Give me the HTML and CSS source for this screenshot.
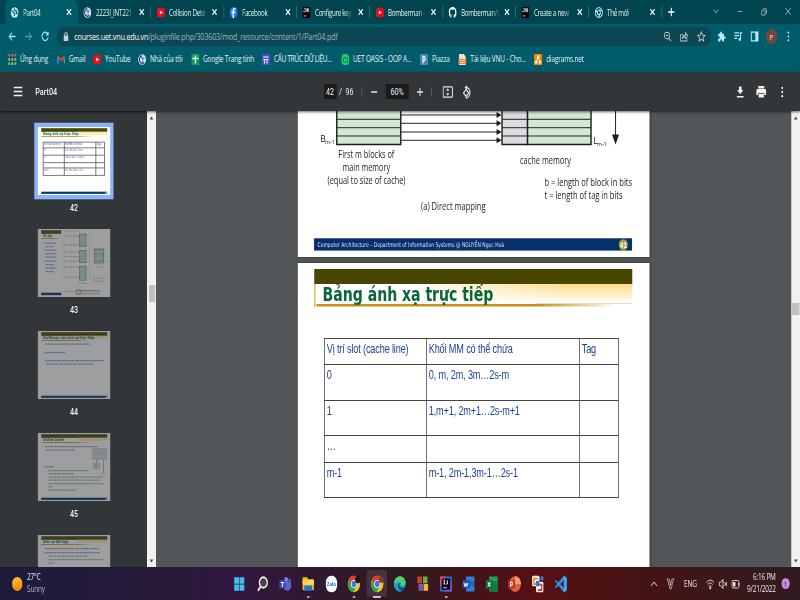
FILE: index.html
```html
<!DOCTYPE html>
<html lang="vi">
<head>
<meta charset="utf-8">
<title>Part04</title>
<link rel="stylesheet" href="styles.css">
</head>
<body>
<svg width="0" height="0" class="defs">
  <defs>
    <linearGradient id="gold" x1="0" x2="1"><stop offset="0" stop-color="#c49a10"/><stop offset=".65" stop-color="#c49a10"/><stop offset="1" stop-color="#fff"/></linearGradient>
    <linearGradient id="sun" x1="0" x2="0" y2="1"><stop offset="0" stop-color="#ffc21f"/><stop offset="1" stop-color="#f5820d"/></linearGradient>
    <linearGradient id="edge" x1="0" x2="1" y2="1"><stop offset="0" stop-color="#2ec2c8"/><stop offset="1" stop-color="#0f6cc4"/></linearGradient>
    <symbol id="x" viewBox="0 0 10 10"><path d="M2.2 2.2l5.6 5.6M7.8 2.2L2.2 7.8" stroke="#eef7f8" stroke-width="1.5" fill="none"/></symbol>
    <symbol id="globe" viewBox="0 0 16 16"><circle cx="8" cy="8" r="7.5" fill="#bdf0f4"/><path d="M2 5l4 3 2 2-1 3M7 2l1 3 4 1-1 3 3 1" stroke="#075d6b" stroke-width="2" fill="none"/></symbol>
    <symbol id="uet" viewBox="0 0 16 16"><circle cx="8" cy="8" r="7.6" fill="#d8e2f2"/><path d="M8 2.500a5.500 5.500 0 1 0 4 9.500" fill="none" stroke="#1f3a7c" stroke-width="2"/><path d="M6 6h6.500M9.300 6v6" stroke="#4a69a8" stroke-width="1.600"/></symbol>
    <symbol id="yt" viewBox="0 0 16 16"><rect x="0" y="1" width="16" height="14" rx="4.5" fill="#f00814"/><path d="M6 5l6 3-6 3z" fill="#fff"/></symbol>
    <symbol id="fb" viewBox="0 0 16 16"><circle cx="8" cy="8" r="8" fill="#1778f2"/><path d="M8.7 16V9h2.6l.4-2.5h-3V5q0-1.4 1.6-1.4h1.5V1.4Q6 .4 6 4.600V6.500H3.800V9H6v7z" fill="#fff"/></symbol>
    <symbol id="jb" viewBox="0 0 16 16"><rect width="16" height="16" fill="#050505"/><path d="M3.500 2h2.500v4.800H2.500V5.500M8.800 2h3v2.400h-3zM8.800 4.400h3.600v2.400H8.800z" fill="none" stroke="#fff" stroke-width="1.100"/><path d="M3 13h5" stroke="#fff" stroke-width="1.300"/></symbol>
    <symbol id="gh" viewBox="0 0 16 16"><path fill="#fff" d="M8 0C3.580 0 0 3.580 0 8c0 3.540 2.290 6.530 5.470 7.590.4.070.55-.17.55-.38v-1.490c-2.010.37-2.530-.49-2.690-.94-.09-.23-.48-.94-.82-1.130-.28-.15-.68-.52-.01-.53.63-.01 1.080.58 1.230.82.72 1.210 1.870.87 2.330.66.07-.52.28-.87.51-1.070-1.780-.2-3.640-.89-3.640-3.950 0-.87.31-1.590.82-2.150-.08-.2-.36-1.020.08-2.120 0 0 .67-.21 2.200.82a7.600 7.600 0 0 1 4 0c1.530-1.040 2.200-.82 2.200-.82.44 1.100.16 1.920.08 2.120.51.56.82 1.270.82 2.150 0 3.070-1.870 3.750-3.650 3.950.29.25.54.73.54 1.480v2.200c0 .21.15.46.55.38A8 8 0 0 0 16 8c0-4.420-3.580-8-8-8z"/></symbol>
    <symbol id="newtab" viewBox="0 0 16 16"><circle cx="8" cy="8" r="7" fill="none" stroke="#a8e6ec" stroke-width="1.800"/><circle cx="8" cy="8" r="3" fill="none" stroke="#a8e6ec" stroke-width="1.800"/><path d="M8 5h6M5.400 9.500L2.300 4.500M10.600 9.500L8 15" stroke="#a8e6ec" stroke-width="1.800"/></symbol>
    <symbol id="dots" viewBox="0 0 16 16"><circle cx="8" cy="2.500" r="1.600"/><circle cx="8" cy="8" r="1.600"/><circle cx="8" cy="13.500" r="1.600"/></symbol>
    <symbol id="chrome" viewBox="0 0 24 24"><circle cx="12" cy="12" r="11" fill="#fbc116"/><path d="M2.500 6.500A11 11 0 0 1 21.500 6.500H12L7 14.500z" fill="#e33b2e"/><path d="M2.500 6.500A11 11 0 0 0 11 23l5.500-8.500H7z" fill="#2da94f"/><circle cx="12" cy="12" r="5.400" fill="#fff"/><circle cx="12" cy="12" r="4.200" fill="#3b78e7"/></symbol>
    <symbol id="up" viewBox="0 0 10 10"><path d="M2 7l3-4 3 4z" fill="#444"/></symbol>
    <g id="slide"><rect width="73.3" height="68" fill="#fff"/><rect x="3.700" y="1.200" width="66" height="3.600" fill="#4a4700"/><rect x="3.700" y="9" width="52" height=".9" fill="url(#gold)"/><rect x="40" y="4.800" width="29.700" height="3" fill="#fdebb0"/><rect x="3.700" y="64.500" width="66" height="2.200" fill="#08386b"/><rect x="68" y="64.500" width="1" height="2.200" fill="#eee"/></g>
  </defs>
</svg>

<div class="screen">
  <div class="tabs">
    <div class="tab active"><svg class="fav"><use href="#globe"/></svg><span>Part04</span><svg class="x"><use href="#x"/></svg></div>
    <div class="tab"><svg class="fav"><use href="#uet"/></svg><span>2223I_INT221</span><svg class="x"><use href="#x"/></svg></div>
    <div class="tab"><svg class="fav"><use href="#yt"/></svg><span>Collision Dete</span><svg class="x"><use href="#x"/></svg></div>
    <div class="tab"><svg class="fav"><use href="#fb"/></svg><span>Facebook</span><svg class="x"><use href="#x"/></svg></div>
    <div class="tab"><svg class="fav"><use href="#jb"/></svg><span>Configure key</span><svg class="x"><use href="#x"/></svg></div>
    <div class="tab"><svg class="fav"><use href="#yt"/></svg><span>Bomberman -</span><svg class="x"><use href="#x"/></svg></div>
    <div class="tab"><svg class="fav"><use href="#gh"/></svg><span>Bomberman/s</span><svg class="x"><use href="#x"/></svg></div>
    <div class="tab"><svg class="fav"><use href="#jb"/></svg><span>Create a new</span><svg class="x"><use href="#x"/></svg></div>
    <div class="tab"><svg class="fav"><use href="#newtab"/></svg><span>Thẻ mới</span><svg class="x"><use href="#x"/></svg></div>
    <svg class="plus" viewBox="0 0 10 10"><path d="M5 .8v8.400M.8 5h8.400" stroke="#fff" stroke-width="1.400"/></svg>
    <div class="win">
      <svg viewBox="0 0 10 10"><path d="M1.500 3L5 6.500 8.500 3" /></svg>
      <svg viewBox="0 0 10 10"><path d="M1.500 5h7"/></svg>
      <svg viewBox="0 0 10 10"><path d="M1.500 3.500h5v5.500h-5zM3.500 1.500h3q2 0 2 2v4"/></svg>
      <svg viewBox="0 0 10 10"><path d="M1.200 1.200l7.600 7.600M8.800 1.200L1.200 8.800"/></svg>
    </div>
  </div>

  <div class="address">
    <div class="nav">
      <svg viewBox="0 0 12 12"><path d="M11 6H2M6 1.800L1.800 6 6 10.200" stroke="#a4e5ed"/></svg>
      <svg viewBox="0 0 12 12"><path d="M1 6h9M6 1.800L10.200 6 6 10.200" stroke="#4d98a4"/></svg>
      <svg viewBox="0 0 12 12"><path d="M10 3.500A4.500 4.500 0 1 0 10.500 7M10.500 1v3.300H7.200" stroke="#a4e5ed"/></svg>
    </div>
    <div class="omni">
      <svg class="lock" viewBox="0 0 8 11"><rect x="1" y="4.500" width="6" height="5.500" fill="#c3d3d7"/><path d="M2.300 5V2.800q1.700-2.600 3.400 0V5" fill="none" stroke="#c3d3d7" stroke-width="1.200"/></svg>
      <span class="url"><b>courses.uet.vnu.edu.vn</b>/pluginfile.php/303603/mod_resource/content/1/Part04.pdf</span>
      <div class="cells">
        <svg viewBox="0 0 12 12"><circle cx="5" cy="5" r="3.700"/><path d="M3.300 5h3.400M7.800 7.800l3.400 3.400"/></svg>
        <svg viewBox="0 0 12 12"><path d="M4 4H1v7h9V8M3.500 8.500Q4 4.500 8 4.500V2l3.500 3.500L8 8V6.500Q5 6 3.500 8.500z"/></svg>
        <svg viewBox="0 0 12 12"><path d="M6 1l1.500 3.400 3.700.3-2.800 2.500.9 3.700L6 9 2.700 10.900l.9-3.700L.8 4.700l3.700-.3z"/></svg>
      </div>
    </div>
    <div class="cells tools">
      <svg viewBox="0 0 12 12"><path class="f" d="M1 3h3q-.5-2.500 1.300-2.500T6.600 3H9.500v3q2.500-.4 2.500 1.200T9.500 8.500V11.500H7Q7 9 5.500 9T4 11.500H1V8.500q2.500 0 2.500-1.400T1 5.800z"/></svg>
      <svg viewBox="0 0 12 12"><path d="M.5 2h7M.5 5h7M.5 8h4M9.500 9V2h2.500"/><circle class="f" cx="8.300" cy="9.200" r="1.600"/></svg>
      <svg viewBox="0 0 12 12"><rect x="1.200" y="1.200" width="9.600" height="9.600"/><path class="f" d="M7 1h4v10H7z"/></svg>
      <span class="avatar">P</span>
      <svg viewBox="0 0 16 16" class="dot"><use href="#dots"/></svg>
    </div>
  </div>

  <div class="marks">
    <div class="m1"><svg viewBox="0 0 11 11"><g fill="#e06055"><rect width="2.500" height="2.500"/><rect x="4.200" width="2.500" height="2.500"/><rect x="8.400" width="2.500" height="2.500"/></g><g fill="#e9b83c"><rect y="4.200" width="2.500" height="2.500"/><rect y="8.400" x="4.200" width="2.500" height="2.500"/><rect y="4.200" x="8.400" width="2.500" height="2.500"/></g><g fill="#7fd0a0"><rect y="8.400" width="2.500" height="2.500"/><rect y="4.200" x="4.200" width="2.500" height="2.500"/><rect y="8.400" x="8.400" width="2.500" height="2.500"/></g></svg><span>Ứng dụng</span></div>
    <div class="m2"><svg viewBox="0 0 11 11"><path d="M1.200 9.500V3" stroke="#4285f4" stroke-width="2"/><path d="M9.800 9.500V3" stroke="#34a853" stroke-width="2"/><path d="M1 2.500l4.500 3.800L10 2.500" fill="none" stroke="#ea4335" stroke-width="2"/></svg><span>Gmail</span></div>
    <div class="m3"><svg><use href="#yt"/></svg><span>YouTube</span></div>
    <div class="m4"><svg><use href="#uet"/></svg><span>Nhà của tôi</span></div>
    <div class="m5"><svg viewBox="0 0 11 11"><rect width="11" height="11" fill="#119d58"/><path d="M5.500 1.500v8M1.500 4.500h8" stroke="#fff" stroke-width="1.500"/></svg><span>Google Trang tính</span></div>
    <div class="m6"><svg viewBox="0 0 11 11"><rect width="11" height="11" fill="#4350c4"/><path d="M2 3h7M2 5.500h7M3.500 5.500v3.500h1M7 5.500V9H6" stroke="#fff" stroke-width="1.200" fill="none"/></svg><span>CẤU TRÚC DỮ LIỆU...</span></div>
    <div class="m7"><svg viewBox="0 0 11 11"><rect x=".3" width="10.400" height="11" rx="4.500" fill="#1fcf75"/><path d="M3 4h5v4H3zM5.500 4V2.500" fill="none" stroke="#0a7f50" stroke-width="1"/></svg><span>UET OASIS - OOP A...</span></div>
    <div class="m8"><svg viewBox="0 0 11 11"><rect width="11" height="11" fill="#4a86b4"/><path d="M4 9.500V2.500h1.800q2.400 2 0 4H4" fill="none" stroke="#fff" stroke-width="1.400"/></svg><span>Piazza</span></div>
    <div class="m9"><svg viewBox="0 0 11 11"><path d="M1 0h6.500L10 3v8H1z" fill="#f3e1cf"/><path d="M0 5h11v5H0z" fill="#ee8434"/><path d="M2 6.500h7M2 8.500h7" stroke="#fff" stroke-width=".8"/></svg><span>Tài liệu VNU - Cho...</span></div>
    <div class="m10"><svg viewBox="0 0 11 11"><rect width="11" height="11" fill="#f08705"/><path d="M5.500 3L3 8M5.500 3L8 8" stroke="#fff"/><path d="M4 1.500h3v2.500H4zM1.500 7h3v2.500h-3zM6.500 7h3v2.500h-3z" fill="#fff"/></svg><span>diagrams.net</span></div>
  </div>

  <div class="pdfbar">
    <svg class="burger" viewBox="0 0 12 11"><path d="M0 1.500h12M0 5.500h12M0 9.500h12" stroke="#f1f1f1" stroke-width="1.500"/></svg>
    <b class="name">Part04</b>
    <span class="box pageno">42</span><span class="total">/&nbsp; 96</span>
    <i class="bar"></i>
    <svg class="minus" viewBox="0 0 10 10"><path d="M1 5h8"/></svg>
    <span class="box zoom">60%</span>
    <svg class="plus2" viewBox="0 0 10 10"><path d="M1 5h8M5 1v8"/></svg>
    <i class="bar"></i>
    <svg class="fit" viewBox="0 0 14 12"><rect x=".8" y=".8" width="12.400" height="10.400" rx="1"/><path class="f" d="M5 4.800L7 2.300l2 2.500zM5 7.200L7 9.700l2-2.500z"/></svg>
    <svg class="rot" viewBox="0 0 14 14"><path d="M6.500 4.500l3.500 3.500-3.500 3.500L3 8zM6.500 2.300A5 5 0 1 1 6 13"/><path class="f" d="M7.500 0v5L4.500 2.500z"/></svg>
    <svg class="down" viewBox="0 0 12 12"><path class="f" d="M4.300.5h3.400V4h2.500L6 8.300 1.800 4h2.500zM1.500 10h9v1.500h-9z"/></svg>
    <svg class="print" viewBox="0 0 14 12"><path class="f" d="M3 0h8v2.500H3zM2 3h10q1.500 0 1.500 1.500V9H11V7H3v2H.5V4.500Q.5 3 2 3z"/><path class="f" d="M3.500 7.700h7V11.500h-7z"/></svg>
    <svg class="more"><use href="#dots"/></svg>
  </div>

  <div class="main">
    <div class="side">
      <div class="thumb sel"><svg viewBox="0 0 73.3 68" preserveAspectRatio="none"><use href="#slide"/><text x="5.500" y="8.200" class="tt" textLength="35" lengthAdjust="spacingAndGlyphs">Bảng ánh xạ trực tiếp</text><path d="M5.700 15.100H67M5.700 20.800H67M5.700 28.100H67M5.700 35.500H67M5.700 40.800H67M5.700 48.300H67M5.700 15.100V48.300M26.800 15.100V48.300M58.300 15.100V48.300M67 15.100V48.300" stroke="#444" stroke-width=".7"/><g class="ti"><text x="6.500" y="18.300" textLength="17" lengthAdjust="spacingAndGlyphs">Vị trí slot (cache line)</text><text x="27.500" y="18.300" textLength="17" lengthAdjust="spacingAndGlyphs">Khối MM có thể chứa</text><text x="59" y="18.300">Tag</text><text x="6.500" y="23.500">0</text><text x="27.500" y="23.500" textLength="17" lengthAdjust="spacingAndGlyphs">0, m, 2m, 3m…2s-m</text><text x="6.500" y="31">1</text><text x="27.500" y="31" textLength="19" lengthAdjust="spacingAndGlyphs">1,m+1, 2m+1…2s-m+1</text><text x="6.500" y="38">…</text><text x="6.500" y="44">m-1</text><text x="27.500" y="44" textLength="18" lengthAdjust="spacingAndGlyphs">m-1, 2m-1,3m-1…2s-1</text></g></svg><b>42</b></div>
      <div class="thumb"><svg viewBox="0 0 73.3 68" preserveAspectRatio="none"><rect width="73.300" height="68" fill="#fff"/><rect x="3.700" y="1.200" width="20" height="3.600" fill="#4a4700"/><rect x="3.700" y="9" width="19" height=".9" fill="url(#gold)"/><rect x="3.700" y="63.500" width="20" height="2.500" fill="#08386b"/><text x="5.500" y="8.400" class="tt" textLength="9" lengthAdjust="spacingAndGlyphs">Ví dụ</text><path class="ln b" d="M7 14h12M8 17.500h8M7 21h12M8 24.500h11M8 28h11M7 32h12M8 35.500h9M8 39h11M8 42.500h8"/><g fill="#b9dfc5" stroke="#59675e" stroke-width=".5"><rect x="42" y="5" width="6.500" height="12.500"/><rect x="42" y="21.500" width="6.500" height="12"/><rect x="42" y="37" width="6.500" height="14"/><rect x="57" y="20" width="9" height="14"/></g><path class="ln k" d="M27 7h15M27 16h15M27 23h15M27 27.500h15M27 32h15M27 38h15M27 48h15M28 2h13M41 54h10M56 20h13M56 25h12M56 32h13M60 38h6M55 49h14M55 52h13M26 62.500h10M38 62h24"/><path d="M26.500 6v43M52 6v45" stroke="#bbb" stroke-width=".4"/><path d="M38 61.500h24M38 64.500h24" stroke="#666" stroke-width=".5"/><circle cx="41" cy="63" r="2.600" fill="none" stroke="#666" stroke-width=".5"/></svg><b>43</b></div>
      <div class="thumb"><svg viewBox="0 0 73.3 68" preserveAspectRatio="none"><use href="#slide"/><text x="5.500" y="8.200" class="tt" textLength="51" lengthAdjust="spacingAndGlyphs">Ưu/Nhược của ánh xạ trực tiếp</text><path class="ln b" d="M7.500 13h45M7.500 21.500h20M7.500 29.500h59M9 33h47"/></svg><b>44</b></div>
      <div class="thumb"><svg viewBox="0 0 73.3 68" preserveAspectRatio="none"><use href="#slide"/><text x="5.500" y="8.200" class="tt" textLength="21" lengthAdjust="spacingAndGlyphs">Victim Cache</text><path class="ln b" d="M7.500 13.500h53M8.500 17h29M7.500 33.500h9"/><path class="ln g" d="M11 37.500h40M11 40.500h26M11 44h55M11 47h51M11 50.500h55M11 53.500h5M11 57h28"/><path d="M55 15.500h14v11H55zM56 30h6v6h-6z" fill="#d5d9de" stroke="#bbb" stroke-width=".5"/><path d="M59 26.500V30M66 26.500V40" stroke="#666" stroke-width=".5"/><path class="ln k" d="M59.500 21h5M57.500 33h3M63 41h6"/></svg><b>45</b></div>
      <div class="thumb"><svg viewBox="0 0 73.3 68" preserveAspectRatio="none"><use href="#slide"/><text x="5.500" y="8.200" class="tt" textLength="25" lengthAdjust="spacingAndGlyphs">Ánh xạ kết hợp</text><path class="ln b" d="M7.500 13.500h54M7.500 17.500h55"/><path class="ln g" d="M11 21h40M11 24.500h55M11 28h6"/></svg></div>
    </div>
    <div class="sb left"><svg><use href="#up"/></svg><i></i><svg class="dn"><use href="#up"/></svg></div>
    <div class="doc">
      <svg class="page p1" viewBox="297.700 111 351.600 145.700" preserveAspectRatio="none">
        <path d="M336.700 100h64v44.500h-64z" fill="#d2e8d5" stroke="#1c1c1c" stroke-width="1.400"/>
        <path d="M502 100h25.500v44.500H502z" fill="#dddbe0" stroke="#1c1c1c" stroke-width="1.400"/>
        <path d="M527.500 100H591v44.500h-63.500z" fill="#d2e8d5" stroke="#1c1c1c" stroke-width="1.400"/>
        <path d="M336 119.300h64.500M336 127.700h64.500M336 136h64.500M502 119.300h89M502 127.700h89M502 136h89" stroke="#222" stroke-width="1"/>
        <path d="M401 115h97M401 123.300h97M401 132h97M401 140.300h97M615.500 100v38" stroke="#222" stroke-width="1"/>
        <path d="M496.500 112l5 3-5 3zM496.500 120.300l5 3-5 3zM496.500 129l5 3-5 3zM496.500 137.300l5 3-5 3zM612 134.500h7l-3.500 10z" fill="#1c1c1c"/>
        <g class="dia">
          <text x="320.300" y="142" class="lbl">B<tspan class="sub" dy="2">m–1</tspan></text>
          <text x="593.300" y="144.500" class="lbl">L<tspan class="sub" dy="2">m–1</tspan></text>
          <text x="338.300" y="157.700" textLength="56" lengthAdjust="spacingAndGlyphs">First m blocks of</text>
          <text x="342.500" y="171" textLength="47.500" lengthAdjust="spacingAndGlyphs">main memory</text>
          <text x="327.500" y="184.300" textLength="78" lengthAdjust="spacingAndGlyphs">(equal to size of cache)</text>
          <text x="421" y="209.800" textLength="64.500" lengthAdjust="spacingAndGlyphs">(a) Direct mapping</text>
          <text x="520" y="164" textLength="51" lengthAdjust="spacingAndGlyphs">cache memory</text>
          <text x="544.500" y="186.300" textLength="87.500" lengthAdjust="spacingAndGlyphs">b = length of block in bits</text>
          <text x="544.500" y="199.300" textLength="78" lengthAdjust="spacingAndGlyphs">t = length of tag in bits</text>
        </g>
        <rect x="314" y="238.300" width="318" height="12.300" fill="#05306b"/>
        <text class="foot" x="317.500" y="246.800" textLength="186.500" lengthAdjust="spacingAndGlyphs">Computer Architecture – Department of Information Systems @ NGUYỄN Ngọc Hoà</text>
        <ellipse cx="623.300" cy="244.800" rx="4.500" ry="5.600" fill="#a5a443"/>
        <text class="no" x="620" y="247.800" textLength="7" lengthAdjust="spacingAndGlyphs">41</text>
      </svg>
      <div class="page p2">
        <div class="band"></div>
        <div class="head"><h1>Bảng ánh xạ trực tiếp</h1></div>
        <table>
          <tr class="r1"><td>Vị trí slot (cache line)</td><td>Khối MM có thể chứa</td><td>Tag</td></tr>
          <tr class="r2"><td>0</td><td>0, m, 2m, 3m…2s-m</td><td></td></tr>
          <tr class="r3"><td>1</td><td>1,m+1, 2m+1…2s-m+1</td><td></td></tr>
          <tr class="r4"><td>…</td><td></td><td></td></tr>
          <tr class="r5"><td>m-1</td><td>m-1, 2m-1,3m-1…2s-1</td><td></td></tr>
        </table>
      </div>
    </div>
    <div class="sb right"><svg><use href="#up"/></svg><i></i><svg class="dn"><use href="#up"/></svg></div>
  </div>

  <div class="task">
    <svg class="sun" viewBox="0 0 14 14"><circle cx="7" cy="7" r="7" fill="url(#sun)"/></svg>
    <div class="wx">27°C<br><span>Sunny</span></div>
    <div class="apps">
      <div><svg viewBox="0 0 24 24"><path d="M3 3h8.500v8.500H3zM12.500 3H21v8.500h-8.500zM3 12.500h8.500V21H3zM12.500 12.500H21V21h-8.500z" fill="#42bdf0"/></svg></div>
      <div><svg viewBox="0 0 24 24"><circle cx="13.500" cy="10" r="7" fill="#444" stroke="#f1f1f1" stroke-width="2.400"/><path d="M8.500 15.500L4 21" stroke="#f1f1f1" stroke-width="2.800"/></svg></div>
      <div><svg viewBox="0 0 24 24"><circle cx="14" cy="6" r="3.500" fill="#7b83eb"/><circle cx="20" cy="7" r="2.300" fill="#5059c9"/><path d="M9 9h14v7q-2 5-7 5t-7-5z" fill="#5b63c8"/><rect x="2" y="7" width="11" height="11" rx="1" fill="#4049b5"/><path d="M4.500 10h6M7.500 10v6" stroke="#fff" stroke-width="1.600"/></svg></div>
      <div class="run"><svg viewBox="0 0 24 24"><path d="M2 3h8l2 2.500h10V20H2z" fill="#f6bd2b"/><path d="M2 7h20v6H2z" fill="#ffd75e"/><path d="M5 14h14v7H5z" fill="#1f77c8"/></svg></div>
      <div><svg viewBox="0 0 24 24"><rect x="2" y="1" width="20" height="22" rx="9" fill="#f6faff"/><path d="M3 8h18v8H3z" fill="#fff"/><text x="4" y="15" class="zalo" textLength="16" lengthAdjust="spacingAndGlyphs">Zalo</text></svg></div>
      <div class="run"><svg viewBox="0 0 24 24"><use href="#chrome"/><circle cx="19" cy="6" r="5" fill="#171314"/></svg></div>
      <div class="run on"><svg viewBox="0 0 24 24"><use href="#chrome"/><circle cx="19" cy="6" r="4.500" fill="#7a3f35"/></svg></div>
      <div><svg viewBox="0 0 24 24"><circle cx="12" cy="12" r="10.500" fill="url(#edge)"/><path d="M12 1.500q9 0 10.500 8 0 5-6 5.500-3 0-3-1.500Q16 9 11 8.500 5 9 2 12 2 3 12 1.500z" fill="#4fd06d"/><path d="M9 12q-1 8 8 8.500 3 0 5-4-5 2-8.500 0T12 11z" fill="#123f80"/></svg></div>
      <div><svg viewBox="0 0 24 24"><path d="M2 2h8v9H2z" fill="#d63a24"/><path d="M12 2h8v9h-8z" fill="#6fae2c"/><path d="M4 12h8v9H4z" fill="#7a56b5"/><path d="M13 12h8v9h-8z" fill="#f3ba22"/></svg></div>
      <div class="run"><svg viewBox="0 0 24 24"><path d="M1 2h21v20H1z" fill="#2b66d9"/><path d="M1 2h10L1 16z" fill="#f33f75"/><path d="M22 8v14H9z" fill="#8b4fd0"/><path d="M4 4.500h15v15H4z" fill="#0a0a12"/><path d="M7 7h3M8.500 7v5M7 12h3M14 7v5h-2.500M7 17h6" stroke="#fff" stroke-width="1.300" fill="none"/></svg></div>
      <div><svg viewBox="0 0 24 24"><path d="M7 2h15v20H7z" fill="#2f7fd6"/><path d="M7 8h15v7H7z" fill="#2264bd"/><path d="M1 7h12v11H1z" fill="#1a51a5"/><path d="M3.500 10l1.700 5.500L7 11l1.800 4.500 1.700-5.500" fill="none" stroke="#fff" stroke-width="1.300"/></svg></div>
      <div><svg viewBox="0 0 24 24"><path d="M7 2h15v20H7z" fill="#21a060"/><path d="M14 8h8v14H7v-6z" fill="#127a42"/><path d="M1 7h12v11H1z" fill="#0f703b"/><path d="M4.500 9.500l5 6M9.500 9.500l-5 6" stroke="#fff" stroke-width="1.400"/></svg></div>
      <div><svg viewBox="0 0 24 24"><circle cx="13" cy="12" r="10.500" fill="#e0603f"/><path d="M13 1.500A10.500 10.500 0 0 1 23.500 12H13z" fill="#f59a78"/><path d="M1 7h12v11H1z" fill="#c13c1b"/><path d="M5 16V9.500h2.500q2.500 2 0 4H5" stroke="#fff" stroke-width="1.400" fill="none"/></svg></div>
      <div><svg viewBox="0 0 24 24"><rect x="2" y="1" width="13" height="14" rx="2" fill="#f4f4f4"/><rect x="9" y="9" width="13" height="14" rx="2" fill="#f4f4f4"/><path d="M12 5H5v7h4" fill="none" stroke="#e98a22" stroke-width="2.400"/><path d="M12 20h7v-7h-4" fill="none" stroke="#d8432f" stroke-width="2.400"/><path d="M9 8h6v7H9z" fill="#2f73d9"/><path d="M17 2h5v5h-5z" fill="#3a7de0"/></svg></div>
      <div><svg viewBox="0 0 24 24"><path d="M17 1l5 2.500v17L17 23 7 14l-4 3.500L1 16l4-4-4-4 2-1.500L7 10zM17 7l-6 5 6 5z" fill="#2a8fe0" fill-rule="evenodd"/><path d="M17 1l5 2.500v17L17 23z" fill="#3fa9f5"/></svg></div>
    </div>
    <div class="tray">
      <svg class="c" viewBox="0 0 10 10"><path d="M1 7l4-4 4 4"/></svg>
      <svg class="v" viewBox="0 0 12 12"><path d="M2 1L5.300 11h1.400L10 1M4.500 1.500l1.500 6 1.500-6M1 1h3.500M7.500 1H11" /></svg>
      <span class="eng">ENG</span>
      <svg class="s" viewBox="0 0 12 12"><path d="M.8 4.500q5.200-5 10.400 0M2.600 6.500q3.400-3.200 6.800 0M4.300 8.400q1.700-1.600 3.400 0"/><circle class="f" cx="6" cy="10" r="1.200"/></svg>
      <svg class="s" viewBox="0 0 12 12"><path d="M1 4.300h2L6 1.500v9L3 7.700H1zM8 4l3.500 4M11.500 4L8 8"/></svg>
      <svg class="s" viewBox="0 0 12 12"><rect x="1" y="2.500" width="9" height="7.500" rx="1.500"/><path class="f" d="M2.500 4h3v4.500h-3zM11 5h1v2.500h-1z"/></svg>
      <div class="clock">6:16 PM<br>9/21/2022</div>
      <span class="badge">1</span>
    </div>
  </div>
</div>
</body>
</html>
```
FILE: styles.css
```css
* { box-sizing: border-box; }
html, body { margin: 0; width: 800px; height: 600px; overflow: hidden; background: #525659; }
.defs { position: absolute; }
svg { flex: none; display: block; }

/* The desktop is laid out at 16:9 and squeezed to a 4:3 window. */
.screen {
  width: 1066.66px; height: 600px; transform: scaleX(.75); transform-origin: 0 0; overflow: hidden;
  display: flex; flex-direction: column;
  font-family: "Open Sans", "Noto Sans", sans-serif; color: #e8f3f5;
}
.f { fill: currentColor; stroke: none; }

.tabs { height: 24px; flex: none; display: flex; align-items: center; padding-left: 6.667px; background: #004450; }
.tab { width: 97.333px; height: 24px; flex: none; display: flex; align-items: center; padding-left: 7.5px; font-size: 8.3px; letter-spacing: -.35px; position: relative; }
.tab:not(.active)::after { content: ""; position: absolute; right: 0; top: 6px; width: 1px; height: 12px; background: #3d717b; }
.tab.active { background: #005c6b; border-radius: 6px 6px 0 0; }
.tab span { width: 52.5px; margin-left: 5.5px; overflow: hidden; white-space: nowrap; -webkit-mask: linear-gradient(90deg, #000 75%, transparent); mask: linear-gradient(90deg, #000 75%, transparent); }
.fav { width: 11px; height: 11px; }
.x { width: 10px; height: 10px; margin-left: 3.5px; }
.plus { width: 10px; height: 10px; margin-left: 7px; }
.win { margin-left: auto; display: flex; }
.win svg { width: 31.8px; height: 9px; fill: none; stroke: #bcd2d6; stroke-width: .9; margin-bottom: 2px; }

.address { height: 25px; flex: none; display: flex; align-items: center; background: #005c6b; }
.nav { display: flex; width: 76px; padding-left: 4.500px; }
.nav svg { width: 22.2px; height: 11px; fill: none; stroke-width: 1.400; }
.omni { width: 872px; height: 19px; border-radius: 10px; background: #0d4754; display: flex; align-items: center; padding-left: 8px; }
.lock { width: 8px; height: 11px; }
.url { margin-left: 7px; font-size: 9.7px; letter-spacing: -.29px; color: #92b4ba; white-space: nowrap; }
.url b { font-weight: 400; color: #f4fafb; }
.cells { margin-left: auto; display: flex; color: #b9cfd3; padding-right: 2px; }
.cells svg { width: 22.3px; height: 11px; fill: none; stroke: currentColor; stroke-width: 1.1; }
.tools { margin-left: 2.500px; padding: 0; align-items: center; color: #b4eef4; }
.tools svg { stroke-width: 1.400; }
.tools svg.dot { fill: #b4eef4; stroke: none; }
.avatar { width: 15px; height: 15px; margin: 0 3.600px; border-radius: 50%; background: #78453e; color: #eee; font-size: 8px; line-height: 15px; text-align: center; }

.marks { height: 23px; flex: none; display: flex; align-items: center; background: #005c6b; padding: 0 0 3px 10.500px; font-size: 8.6px; letter-spacing: -.2px; white-space: nowrap; }
.marks div { display: flex; align-items: center; flex: none; }
.marks svg { width: 11px; height: 11px; margin-right: 5px; }
.m1 { width: 65px; } .m2 { width: 48.500px; } .m3 { width: 60px; } .m4 { width: 70.700px; }
.m5 { width: 94.700px; } .m6 { width: 105.300px; } .m7 { width: 105.300px; } .m8 { width: 51px; } .m9 { width: 101.300px; }
.m6 span { letter-spacing: -.33px; }

.pdfbar { height: 39px; flex: none; display: flex; align-items: center; background: #323639; color: #f1f1f1; font-family: Roboto, sans-serif; font-size: 9.5px; padding-left: 17.500px; position: relative; box-shadow: 0 1px 3px rgba(0,0,0,.6); }
.pdfbar svg { fill: none; stroke: #e8e8e8; stroke-width: 1.300; }
.pdfbar .f { fill: #f1f1f1; stroke: none; }
.burger { width: 12px; height: 11px; }
.name { margin-left: 17.500px; width: 384.500px; font-weight: 500; font-size: 9.7px; }
.box { background: #191b1c; height: 15px; line-height: 15px; text-align: center; }
.pageno { width: 17px; }
.total { margin-left: 3.500px; width: 30px; white-space: nowrap; }
.bar { width: 1px; height: 10px; background: #65686b; }
.minus { width: 10px; height: 10px; margin: 0 10px 0 11px; }
.zoom { width: 31px; }
.plus2 { width: 10px; height: 10px; margin: 0 10px; }
.fit { width: 14px; height: 12px; margin-left: 14px; }
.rot { width: 14px; height: 14px; margin-left: 11px; }
.down { width: 12px; height: 12px; margin-left: 352px; }
.print { width: 14px; height: 12px; margin-left: 15px; }
.pdfbar .more { width: 12px; height: 12px; margin-left: 15px; fill: #f1f1f1; stroke: none; }

.main { height: 456px; flex: none; display: flex; background: #525659; overflow: hidden; }
.side { width: 196.500px; background: #323639; padding: 16.200px 0 0 49.700px; overflow: hidden; }
.thumb { width: 97.800px; height: 102px; }
.thumb svg { width: 97.800px; height: 68.200px; opacity: .52; }
.thumb.sel svg { opacity: 1; box-shadow: 0 0 0 4.300px #8ab4f8; }
.thumb b { display: block; text-align: center; margin-top: 7px; font: 500 9.5px/12px Roboto, sans-serif; color: #f1f1f1; }
.tt { font: bold 4.200px "DejaVu Sans", sans-serif; fill: #0c6a3c; }
.ti { font: 2.600px "Liberation Sans", sans-serif; fill: #2b4590; }
.ln { fill: none; stroke-width: 1.200; stroke-dasharray: 2.600 .5 1.400 .4 3.200 .6; opacity: .5; }
.b { stroke: #2a429c; } .g { stroke: #3e7a4c; } .k { stroke: #666; stroke-width: .8; }

.sb { background: #f1f1f1; width: 11.700px; flex: none; display: flex; flex-direction: column; align-items: center; }
.sb svg { width: 8px; height: 8px; margin-top: 3px; }
.sb i { width: 9.500px; background: #c1c1c1; }
.sb .dn { transform: rotate(180deg); margin: auto 0 2px; }
.left i { height: 17px; margin-top: 162.500px; }
.right i { height: 12px; margin-top: 181px; }
.doc { width: 846.800px; flex: none; padding-left: 188.800px; overflow: hidden; }
.page { width: 468.800px; background: #fff; box-shadow: 0 0 3px rgba(0,0,0,.5); }
.p1 { height: 145.700px; }
.dia { font: 10.800px "Open Sans", sans-serif; fill: #1c1c1c; }
.lbl { font-size: 8.500px; letter-spacing: -1px; }
.sub { font-size: 5.500px; letter-spacing: -.5px; }
.foot { font: 6.500px "DejaVu Sans", sans-serif; fill: #d5e2f0; }
.no { font: bold 7.500px "DejaVu Sans", sans-serif; fill: #fff; }
.p2 { height: 320px; margin-top: 6px; padding: 6.300px 0 0 21.700px; }
.band { width: 424px; height: 16px; background: #474500; }
.head {
  width: 424px; height: 23px; padding-left: 11.500px;
  background:
    linear-gradient(90deg, #d9a520, #fff) 0 0 / 3px 100% no-repeat,
    linear-gradient(90deg, #c59213 70%, #fff 95%) 0 100% / 100% 2.500px no-repeat,
    linear-gradient(#ddd, #ddd) 100% 19px / 30% 1px no-repeat,
    linear-gradient(90deg, #fff 30%, transparent 80%),
    linear-gradient(#fddb85, #fff 85%);
}
h1 { margin: -1px 0 0; font: bold 18.800px/22px "DejaVu Sans", sans-serif; color: #0a6639; letter-spacing: -.05px; white-space: nowrap; }
table { border-collapse: collapse; table-layout: fixed; width: 393px; margin: 30.700px 0 0 13px; font: 12.200px/14px "Liberation Sans", sans-serif; letter-spacing: -.2px; color: #1c3f9e; }
td { border: 1px solid #444; padding: 3.500px 0 0 3px; vertical-align: top; white-space: nowrap; }
td:nth-child(1) { width: 136px; } td:nth-child(2) { width: 204px; }
.r1 { height: 26.300px; } .r2 { height: 35.700px; } .r3 { height: 35.300px; } .r4 { height: 27px; } .r5 { height: 35.500px; }

.task { height: 33px; flex: none; display: flex; align-items: center; background: linear-gradient(90deg, #1e1a3c, #281a38 22%, #321740 29%, #30192c 42%, #2f1b20 51%, #421318 58%, #551015 67%, #451414 80%, #301b20); font-size: 8.600px; position: relative; }
.sun { width: 14px; height: 14px; margin-left: 15.500px; }
.wx { width: 100px; margin-left: 6.500px; line-height: 11.300px; letter-spacing: -.2px; }
.wx span { color: #b8b1be; }
.apps { display: flex; margin-left: 168px; }
.apps div { width: 30.600px; height: 27px; display: flex; align-items: center; justify-content: center; position: relative; }
.apps svg { width: 18px; height: 18px; }
.zalo { font: bold 8px "Open Sans", sans-serif; fill: #1769e0; }
.run::after { content: ""; position: absolute; bottom: -.5px; width: 4px; height: 1.800px; border-radius: 1px; background: #a99ba3; }
.apps .on { background: linear-gradient(rgba(255,255,255,.1), rgba(255,255,255,.1)) center / 27px 27px no-repeat; }
.on::after { width: 11px; background: #f0b3cf; }
.tray { margin-left: auto; display: flex; align-items: center; color: #f0eaeb; padding-right: 13.500px; }
.tray svg { fill: none; stroke: currentColor; stroke-width: 1; }
.tray .f { fill: currentColor; stroke: none; }
.tray .v { stroke-width: .7; }
.c { width: 10px; height: 10px; }
.v { width: 12px; height: 12px; margin: 0 12px 0 11px; }
.eng { letter-spacing: -.1px; width: 29.500px; }
.s { width: 12px; height: 12px; margin-right: 4.600px; }
.clock { width: 43px; text-align: right; line-height: 11.300px; letter-spacing: -.3px; white-space: nowrap; margin-right: 7.500px; }
.badge { width: 11.500px; height: 11.500px; border-radius: 50%; background: #c98ad8; color: #2c1730; text-align: center; font-size: 8px; line-height: 11.500px; }
```
